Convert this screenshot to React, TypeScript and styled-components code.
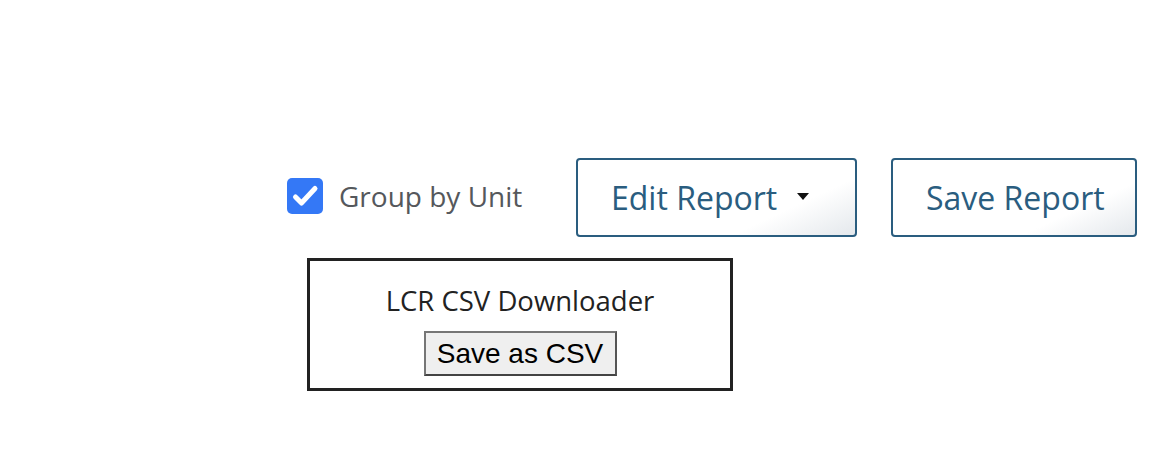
import React from "react";
import styled, { createGlobalStyle } from "styled-components";

const Global = createGlobalStyle`
  html, body { margin: 0; padding: 0; background: #fff; }
  body { font-family: "Open Sans", "Noto Sans", sans-serif; }
`;

const Page = styled.div`
  width: 1156px;
  height: 450px;
  box-sizing: border-box;
  padding: 158px 0 0 287px;
  display: flex;
  flex-direction: column;
`;

const Toolbar = styled.div`
  display: flex;
  align-items: center;
  height: 79px;
`;

const CheckLabel = styled.label`
  display: flex;
  align-items: center;
  flex-shrink: 0;
  white-space: nowrap;
  gap: 16px;
  width: 289px;
  font-family: "Open Sans", sans-serif;
  font-size: 28px;
  color: #55585c;
  margin-top: -3px;
`;

const Box = styled.span`
  width: 36px;
  height: 36px;
  border-radius: 5px;
  background: #3478f6;
  display: flex;
  flex-shrink: 0;
`;

const OutlineButton = styled.button<{ $width: number }>`
  width: ${(p) => p.$width}px;
  flex-shrink: 0;
  white-space: nowrap;
  height: 79px;
  box-sizing: border-box;
  border: 2px solid #2a5d7f;
  border-radius: 4px;
  background: linear-gradient(155deg, #ffffff 72%, #e4e8ec 100%);
  color: #2a5d7f;
  font-family: "Open Sans", sans-serif;
  font-size: 32px;
  display: flex;
  align-items: center;
  padding: 0 0 0 33px;
  margin-right: 34px;
  cursor: pointer;
`;

const Caret = styled.span`
  display: inline-block;
  width: 0;
  height: 0;
  border-top: 7px solid #111;
  border-left: 6.5px solid transparent;
  border-right: 6.5px solid transparent;
  margin-left: 20px;
  margin-top: -3px;
`;

const Downloader = styled.div`
  margin-top: 21px;
  margin-left: 20px;
  width: 426px;
  height: 133px;
  box-sizing: border-box;
  border: 3px solid #222;
  display: flex;
  flex-direction: column;
  align-items: center;
  padding-top: 21px;
`;

const Title = styled.div`
  font-family: "Open Sans", sans-serif;
  font-size: 27.5px;
  color: #222;
  line-height: 37px;
`;

const CsvButton = styled.button`
  margin-top: 12px;
  width: 193px;
  height: 45px;
  box-sizing: border-box;
  background: #efefef;
  border: 2px solid #767676;
  border-bottom-color: #444;
  border-right-color: #555;
  font-family: "Liberation Sans", Arial, sans-serif;
  font-size: 28px;
  color: #000;
  padding: 0;
`;

export default function App() {
  return (
    <>
      <Global />
      <Page>
        <Toolbar>
          <CheckLabel>
            <Box>
              <svg width="36" height="36" viewBox="0 0 36 36">
                <path d="M8.5 19 L14.5 25 L28 10.5" fill="none" stroke="#fff" strokeWidth="5" strokeLinecap="round" strokeLinejoin="round" />
              </svg>
            </Box>
            Group by Unit
          </CheckLabel>
          <OutlineButton $width={281}>
            Edit Report
            <Caret />
          </OutlineButton>
          <OutlineButton $width={246}>Save Report</OutlineButton>
        </Toolbar>
        <Downloader>
          <Title>LCR CSV Downloader</Title>
          <CsvButton>Save as CSV</CsvButton>
        </Downloader>
      </Page>
    </>
  );
}
